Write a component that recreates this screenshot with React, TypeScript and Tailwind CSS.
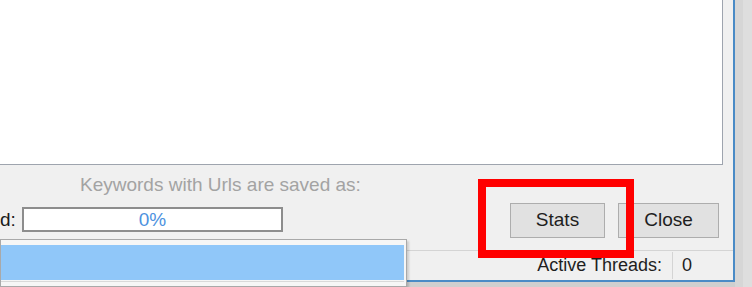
import React from 'react';

const font = { fontFamily: '"Liberation Sans", Arial, sans-serif' };

export default function App() {
  return (
    <div
      className="relative w-[752px] h-[287px] overflow-hidden bg-[#cfcfcf]"
      style={font}
    >
      <div className="flex">
        {/* dialog window */}
        <div className="w-[735px] h-[282px] flex flex-col bg-[#f0f0f0] border-r-2 border-b-2 border-[#4a8bc6]">
          {/* keyword list area */}
          <div className="w-[723px] h-[165px] shrink-0 bg-white border-r border-b border-[#9ea4ae]" />

          {/* controls */}
          <div className="h-[85px] shrink-0 flex">
            <div className="w-[500px] flex flex-col">
              <div className="mt-[9px] h-[22px] leading-[22px] pl-[80px] text-[19px] text-[#a3a3a3]">
                Keywords with Urls are saved as:
              </div>
              <div className="mt-[11px] flex items-center">
                <span className="w-[22px] text-[19px] leading-[22px] text-[#1a1a1a]">
                  d:
                </span>
                <div className="w-[261px] h-[25px] border-2 border-[#8d8d8d] bg-white flex items-center justify-center text-[19px] leading-none text-[#4d92e0]">
                  0%
                </div>
              </div>
            </div>
            <div className="flex items-start pt-[38px] pl-[10px] gap-[13px]">
              <button className="w-[95px] h-[35px] bg-[#e1e1e1] border border-[#adadad] text-[19px] text-[#1e1e1e]">
                Stats
              </button>
              <button className="w-[101px] h-[35px] bg-[#e1e1e1] border border-[#adadad] text-[19px] text-[#1e1e1e]">
                Close
              </button>
            </div>
          </div>

          {/* status bar */}
          <div className="flex-1 flex items-center justify-end border-t border-[#d4d4d4] text-[18px] text-[#1e1e1e]">
            <span className="pr-[10px]">Active Threads:</span>
            <div className="h-[27px] border-l border-[#d4d4d4] pl-[9px] w-[61px] flex items-center">
              0
            </div>
          </div>
        </div>

        {/* neighbouring window edge */}
        <div className="w-[8px] h-[287px] bg-[#d6d6d6]" />
        <div className="flex-1 h-[287px] bg-[#dedede]" />
      </div>

      {/* dropdown popup */}
      <div className="absolute left-0 top-[239px] w-[407px] h-[48px] bg-[#f6f6f6] border border-[#a9a9a9] shadow-[2px_2px_2px_rgba(0,0,0,0.15)] pt-[5px] pr-[2px]">
        <div className="h-[35px] bg-[#90c7f9]" />
        <div className="mt-[1px] h-px bg-[#d9d9d9]" />
      </div>

      {/* annotation box */}
      <div className="absolute left-[478px] top-[179px] w-[156px] h-[79px] border-8 border-[#ff0000]" />
    </div>
  );
}
